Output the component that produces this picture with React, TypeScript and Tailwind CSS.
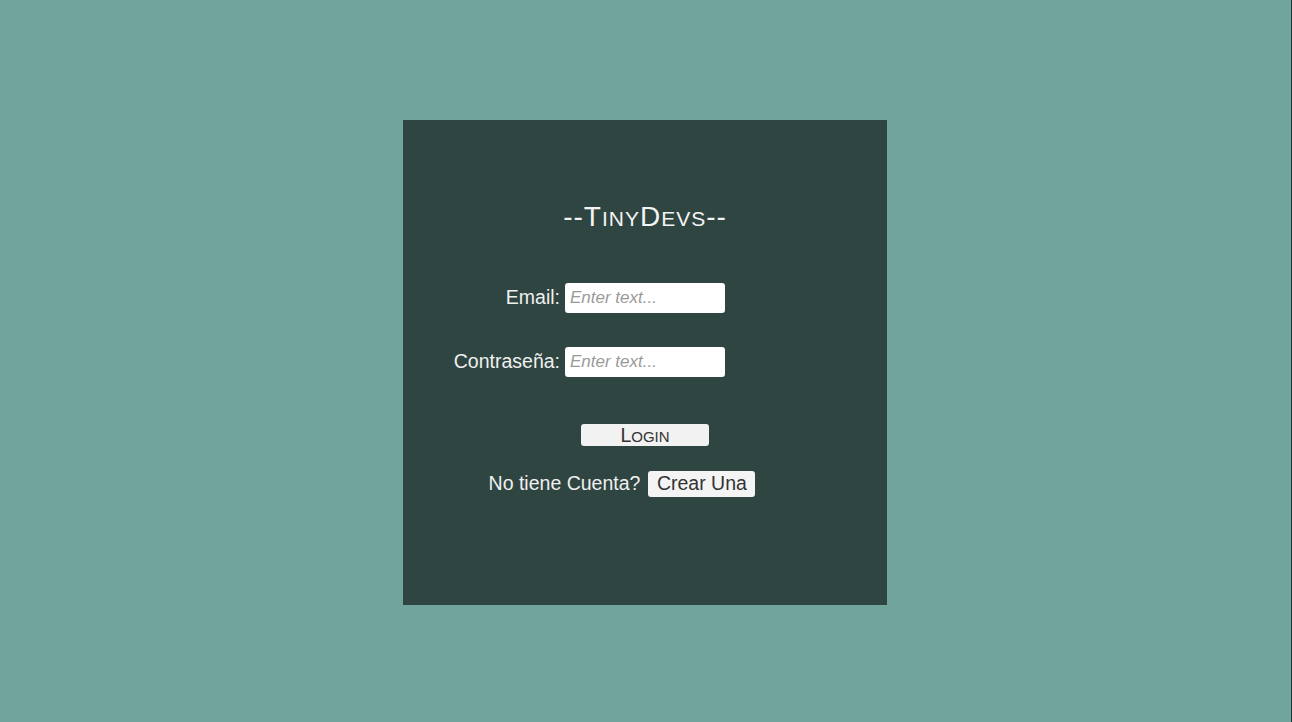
export default function App() {
  return (
    <div className="flex h-screen w-full bg-[#71a49c] font-['Liberation_Sans',Arial,sans-serif]">
      <div className="flex flex-1 justify-center pt-[120px] pr-[1px]">
        <div className="flex h-[485px] w-[484px] flex-col items-center bg-[#2f4541] pt-[83px]">
          <h1 className="h-[28px] text-[28px] leading-none tracking-[1px] text-[#f4f4f4]">
            --T<span className="text-[21px]">INY</span>D<span className="text-[21px]">EVS</span>--
          </h1>

          <div className="mt-[52px] grid w-full grid-cols-[1fr_160px_1fr] items-center gap-x-[5px] gap-y-[34px]">
            <label className="text-right text-[19.5px] leading-none text-[#f0f0f0]">Email:</label>
            <input
              type="text"
              placeholder="Enter text..."
              className="h-[30px] w-[160px] rounded-[3px] bg-white px-[5px] text-[17px] italic text-[#333] outline-none placeholder:text-[#9a9a9a]"
            />
            <div />
            <label className="text-right text-[19.5px] leading-none text-[#f0f0f0]">Contraseña:</label>
            <input
              type="password"
              placeholder="Enter text..."
              className="h-[30px] w-[160px] rounded-[3px] bg-white px-[5px] text-[17px] italic text-[#333] outline-none placeholder:text-[#9a9a9a]"
            />
            <div />
          </div>

          <button className="mt-[47px] h-[22px] w-[128px] rounded-[3px] bg-[#f2f2f2] pt-[2px] text-[19.5px] leading-none text-[#333]">
            L<span className="text-[15px]">OGIN</span>
          </button>

          <div className="mt-[25px] flex items-center gap-[8px] pr-[46px]">
            <span className="text-[19.5px] leading-none text-[#f0f0f0]">No tiene Cuenta?</span>
            <button className="h-[26px] w-[107px] rounded-[3px] bg-[#f4f4f4] text-[19.5px] leading-none text-[#333]">
              Crear Una
            </button>
          </div>
        </div>
      </div>
      <div className="w-px bg-[#1f3330]" />
    </div>
  );
}
